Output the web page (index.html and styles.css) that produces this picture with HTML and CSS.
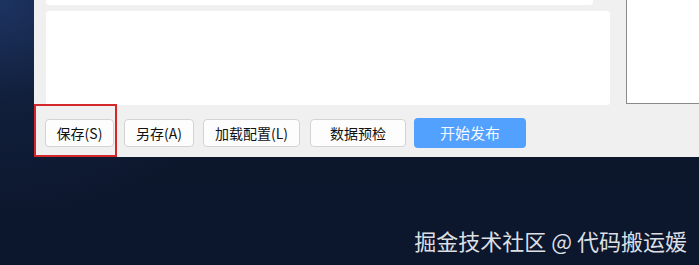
FILE: index.html
```html
<!DOCTYPE html>
<html lang="zh-CN">
<head>
<meta charset="utf-8">
<link rel="stylesheet" href="styles.css">
</head>
<body>
<div class="stage">
  <div class="window">
    <div class="content">
      <div class="left-col">
        <div class="panel-top"></div>
        <div class="panel-main"></div>
      </div>
      <div class="panel-right"></div>
    </div>
    <div class="toolbar">
      <button class="btn btn-save">保存(S)</button>
      <button class="btn btn-saveas">另存(A)</button>
      <button class="btn btn-load">加载配置(L)</button>
      <button class="btn btn-check">数据预检</button>
      <button class="btn btn-primary">开始发布</button>
    </div>
    <div class="highlight"></div>
  </div>
  <div class="watermark">掘金技术社区 @ 代码搬运媛</div>
</div>
</body>
</html>
```
FILE: styles.css
```css
html, body {
  margin: 0;
  padding: 0;
  width: 699px;
  height: 265px;
  overflow: hidden;
}
body {
  background:
    radial-gradient(ellipse 260px 220px at 0 0, #1d3462 0%, rgba(20,36,70,0.6) 45%, rgba(13,24,45,0) 100%),
    linear-gradient(180deg, #0d182c 0%, #0c172d 100%);
  font-family: "Noto Sans CJK SC", "Microsoft YaHei", sans-serif;
}
.stage {
  position: relative;
  height: 265px;
}
.window {
  position: relative;
  margin-left: 34px;
  width: 665px;
  height: 157px;
  background: #f0f0f0;
  display: flex;
  flex-direction: column;
}
.content {
  display: flex;
  padding-left: 12px;
  gap: 16px;
  height: 105px;
}
.left-col {
  width: 564px;
  display: flex;
  flex-direction: column;
  gap: 6px;
}
.panel-top {
  width: 547px;
  height: 5px;
  background: #fff;
  border-radius: 0 0 3px 3px;
}
.panel-main {
  height: 94px;
  background: #fff;
  border-radius: 3px;
}
.panel-right {
  flex: 1;
  height: 103px;
  background: #fff;
  border-left: 1px solid #8a8a8a;
  border-bottom: 1px solid #8a8a8a;
}
.toolbar {
  display: flex;
  align-items: center;
  padding: 13px 0 0 11px;
  height: 30px;
}
.btn {
  height: 28px;
  box-sizing: border-box;
  border: 1px solid #d3d3d3;
  border-radius: 4px;
  background: #fdfdfd;
  color: #111;
  font-family: "Noto Sans CJK SC", "Microsoft YaHei", sans-serif;
  font-size: 14px;
  padding: 0;
  margin: 0;
  line-height: 26px;
}
.btn-save { width: 69px; margin-right: 10px; }
.btn-saveas { width: 70px; margin-right: 9px; }
.btn-load { width: 97px; margin-right: 10px; }
.btn-check { width: 96px; margin-right: 8px; }
.btn-primary {
  width: 112px;
  height: 30px;
  border: none;
  background: #52a1ff;
  color: #f4f8ff;
  font-size: 15px;
  line-height: 30px;
}
.highlight {
  position: absolute;
  left: 0;
  top: 104px;
  width: 83px;
  height: 53px;
  box-sizing: border-box;
  border: 2px solid #d4272c;
}
.watermark {
  text-align: right;
  padding: 68px 12px 0 0;
  font-size: 22px;
  line-height: 30px;
  color: #dcdfe4;
}
```
